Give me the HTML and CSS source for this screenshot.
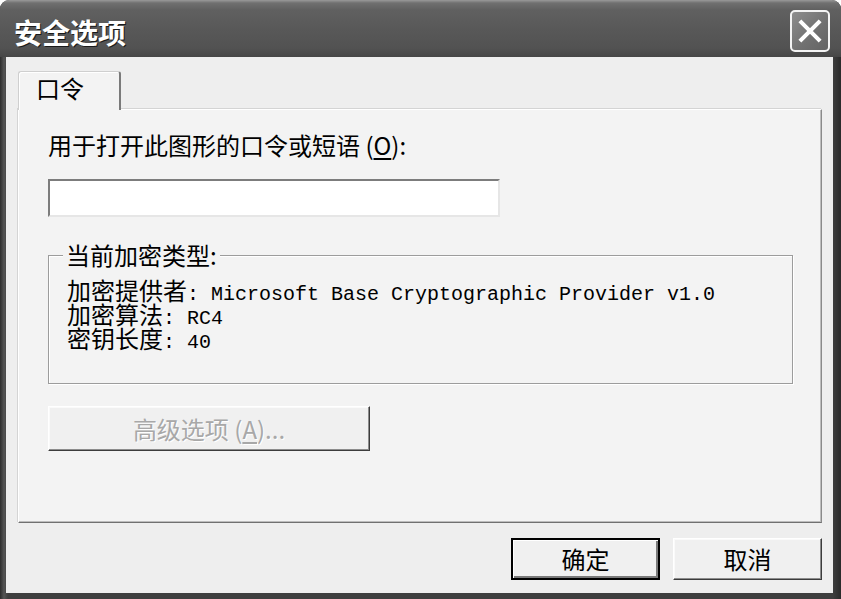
FILE: index.html
```html
<!DOCTYPE html>
<html lang="zh-CN">
<head>
<meta charset="utf-8">
<title>安全选项</title>
<link rel="stylesheet" href="styles.css">
</head>
<body>
<div class="window">
  <div class="titlebar">
    <span class="title">安全选项</span>
    <div class="close" aria-label="关闭">
      <svg viewBox="0 0 24 24" width="24" height="24"><path d="M4 4 L20 20 M20 4 L4 20" stroke="#fff" stroke-width="3.8" stroke-linecap="square" fill="none"/></svg>
    </div>
  </div>
  <div class="client">
    <div class="tabs"><div class="tab">口令</div></div>
    <div class="panel">
      <div class="label">用于打开此图形的口令或短语 (<u>O</u>):</div>
      <div class="input"></div>
      <fieldset class="group">
        <legend>当前加密类型:</legend>
        <div class="info">
          <div>加密提供者<span class="mono">: Microsoft Base Cryptographic Provider v1.0</span></div>
          <div>加密算法<span class="mono">: RC4</span></div>
          <div>密钥长度<span class="mono">: 40</span></div>
        </div>
      </fieldset>
      <div class="btn disabled adv">高级选项 (<u>A</u>)...</div>
    </div>
    <div class="actions">
      <div class="btn default">确定</div>
      <div class="btn cancel">取消</div>
    </div>
  </div>
</div>
</body>
</html>
```

FILE: styles.css
```css
html, body {
  margin: 0;
  background: #fff;
}
body {
  width: 841px;
  height: 599px;
  overflow: hidden;
  font-family: "Noto Sans CJK SC", "Noto Sans", sans-serif;
  color: #000;
}
.window {
  height: 599px;
  box-sizing: border-box;
  display: flex;
  flex-direction: column;
  background: linear-gradient(90deg, #2c2c2c 0, #555 4px, #3e3e3e 8px, #3e3e3e 833px, #2a2a2a 841px);
  border-radius: 9px 9px 0 0;
  overflow: hidden;
}
.titlebar {
  height: 57px;
  flex: none;
  box-sizing: border-box;
  display: flex;
  align-items: center;
  justify-content: space-between;
  padding: 0 11px 0 14px;
  background: linear-gradient(#9a9a9a 0, #707070 3px, #606060 10px, #585858 30px, #525252 48px, #464646 57px);
}
.title {
  color: #fff;
  font-size: 28px;
  font-weight: 700;
  line-height: 32px;
  text-shadow: 1px 1px 0 #1a1a1a;
  margin-top: 6px;
}
.close {
  width: 40px;
  height: 42px;
  box-sizing: border-box;
  margin-top: 5px;
  border: 2px solid #f4f4f4;
  border-radius: 5px;
  background: linear-gradient(135deg, #8e8e8e, #707070 60%, #646464);
  display: flex;
  align-items: center;
  justify-content: center;
}
.close svg {
  width: 26px;
  height: 26px;
}
.client {
  flex: 1;
  margin: 0 8px 6px 6px;
  background: #eeeeee;
  padding: 14px 11px 13px 12px;
  display: flex;
  flex-direction: column;
}
.tabs {
  display: flex;
  height: 38px;
  flex: none;
}
.tab {
  position: relative;
  z-index: 1;
  width: 103px;
  height: 39px;
  box-sizing: border-box;
  border-top: 1px solid #cfcfcf;
  border-left: 1px solid #cfcfcf;
  border-right: 2px solid #7a7a7a;
  border-radius: 3px 3px 0 0;
  box-shadow: inset 1px 1px 0 #fff;
  background: #f3f3f3;
  padding: 2px 0 0 17px;
  font-size: 24px;
  line-height: 28px;
}
.panel {
  flex: 1;
  border: 1px solid;
  border-color: #fff #8a8a8a #707070 #fff;
  box-shadow: inset -1px -1px 0 #bdbdbd, -1px -1px 0 #d4d4d4;
  background: #f3f3f3;
  padding: 21px 0 0 29px;
  font-size: 24px;
  line-height: 28px;
}
.label u, .adv u {
  text-underline-offset: 3px;
}
.input {
  width: 452px;
  height: 38px;
  margin-top: 20px;
  box-sizing: border-box;
  background: #fff;
  border: 2px solid;
  border-color: #7c7c7c #e6e6e6 #e6e6e6 #7c7c7c;
}
.group {
  width: 745px;
  box-sizing: border-box;
  margin: 24px 0 0 0;
  border: 1px solid #9c9c9c;
  box-shadow: inset 1px 1px 0 #fff, 1px 1px 0 #fff;
  padding: 9px 0 33px 14px;
}
.group legend {
  padding: 0 3px;
  font-size: 24px;
  line-height: 28px;
  background: #f3f3f3;
}
.info {
  padding-left: 4px;
  font-size: 24px;
  line-height: 24px;
}
.mono {
  font-family: "Liberation Mono", "DejaVu Sans Mono", monospace;
  font-size: 20px;
  line-height: 12px;
}
.btn {
  box-sizing: border-box;
  display: flex;
  align-items: center;
  justify-content: center;
  background: #f0f0f0;
  border: 1px solid;
  border-color: #fff #3c3c3c #3c3c3c #fff;
  box-shadow: inset -1px -1px 0 #8c8c8c, inset 1px 1px 0 #fafafa;
  font-size: 24px;
  line-height: 28px;
}
.adv {
  width: 322px;
  height: 45px;
  margin-top: 22px;
}
.disabled {
  color: #a8a8a8;
  text-shadow: 1px 1px 0 #fff;
}
.actions {
  display: flex;
  justify-content: flex-end;
  gap: 13px;
  margin-top: 15px;
  flex: none;
}
.actions .btn {
  width: 149px;
  height: 42px;
}
.default {
  border: 2px solid #000;
  box-shadow: inset 1px 1px 0 #fff, inset -2px -2px 0 #7a7a7a;
}
```
